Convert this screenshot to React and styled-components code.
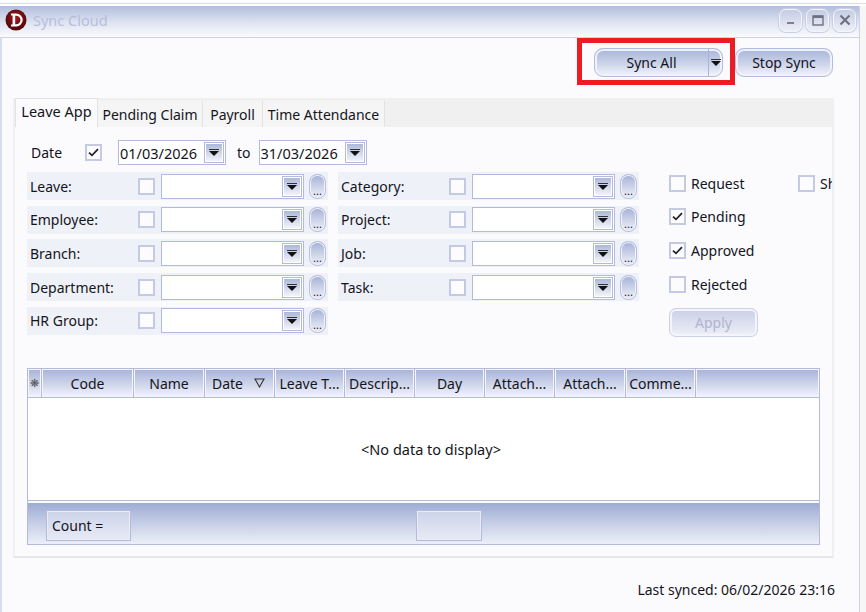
import React from "react";
import styled, { createGlobalStyle } from "styled-components";

const GlobalStyle = createGlobalStyle`
  html, body {
    margin: 0;
    padding: 0;
    background: #fff;
  }
  * {
    box-sizing: border-box;
  }
`;

const leftFilters = ["Leave:", "Employee:", "Branch:", "Department:", "HR Group:"];
const rightFilters = ["Category:", "Project:", "Job:", "Task:"];
const statusChecks = [
  { label: "Request", checked: false },
  { label: "Pending", checked: true },
  { label: "Approved", checked: true },
  { label: "Rejected", checked: false },
];
const columns = [
  { label: "Code", width: 92 },
  { label: "Name", width: 71 },
  { label: "Date", width: 70, sorted: true },
  { label: "Leave T...", width: 70 },
  { label: "Descrip...", width: 70 },
  { label: "Day", width: 70 },
  { label: "Attach...", width: 70 },
  { label: "Attach...", width: 71 },
  { label: "Comme...", width: 70 },
];

const Logo = () => (
  <svg width="22" height="22" viewBox="0 0 22 22">
    <defs>
      <radialGradient id="logoFill" cx="50%" cy="40%" r="60%">
        <stop offset="0%" stopColor="#a5161c" />
        <stop offset="100%" stopColor="#4d0709" />
      </radialGradient>
    </defs>
    <circle cx="11" cy="11" r="10.5" fill="url(#logoFill)" />
    <path
      d="M6 4.5h5.2a6.5 6.5 0 0 1 0 13H6v-2h1.6v-9H6z M10.2 6.7v8.6h1a4.3 4.3 0 0 0 0-8.6z"
      fill="#fff"
      fillRule="evenodd"
    />
  </svg>
);

const Check = () => (
  <svg width="11" height="9" viewBox="0 0 11 9">
    <path d="M1 4.6 L4 7.4 L10 1.2" fill="none" stroke="#222" strokeWidth="1.7" />
  </svg>
);

const CheckBox = ({ checked }) => <Box>{checked && <Check />}</Box>;

const Combo = () => (
  <ComboField>
    <ArrowButton>
      <Arrow />
    </ArrowButton>
  </ComboField>
);

const FilterRow = ({ label }) => (
  <RowBand>
    <RowLabel>{label}</RowLabel>
    <CheckBox />
    <Combo />
    <DotsButton>...</DotsButton>
  </RowBand>
);

export default function App() {
  return (
    <Page>
      <GlobalStyle />
      <TopStrip />
      <Window>
        <TitleBar>
          <Logo />
          <TitleText>Sync Cloud</TitleText>
          <WindowButtons>
            <WindowButton>
              <svg width="10" height="10" viewBox="0 0 10 10">
                <rect x="1" y="7" width="7" height="2" fill="#7d7f8c" />
              </svg>
            </WindowButton>
            <WindowButton>
              <svg width="12" height="11" viewBox="0 0 12 11">
                <rect x="1" y="1" width="10" height="9" fill="none" stroke="#6f7180" strokeWidth="1.4" />
                <rect x="1" y="0.5" width="10" height="2.5" fill="#6f7180" />
              </svg>
            </WindowButton>
            <WindowButton>
              <svg width="12" height="12" viewBox="0 0 12 12">
                <path d="M1.5 1.5 L10.5 10.5 M10.5 1.5 L1.5 10.5" stroke="#6f7180" strokeWidth="2.2" />
              </svg>
            </WindowButton>
          </WindowButtons>
        </TitleBar>
        <Body>
          <Toolbar>
            <SplitButton>
              <SplitLabel>Sync All</SplitLabel>
              <SplitArrow>
                <Arrow />
              </SplitArrow>
              <RedMark />
            </SplitButton>
            <GlossButton>Stop Sync</GlossButton>
          </Toolbar>

          <TabStrip>
            <Tab $active $width={83}>
              Leave App
            </Tab>
            <Tab $width={105}>Pending Claim</Tab>
            <Tab $width={60}>Payroll</Tab>
            <Tab $width={122}>Time Attendance</Tab>
          </TabStrip>

          <TabPanel>
            <DateRow>
              <DateLabel>Date</DateLabel>
              <CheckBox checked />
              <DateField>
                01/03/2026
                <ArrowButton>
                  <Arrow />
                </ArrowButton>
              </DateField>
              <ToLabel>to</ToLabel>
              <DateField $near>
                31/03/2026
                <ArrowButton>
                  <Arrow />
                </ArrowButton>
              </DateField>
            </DateRow>

            <Filters>
              <FilterColumn>
                {leftFilters.map((label) => (
                  <FilterRow key={label} label={label} />
                ))}
              </FilterColumn>
              <FilterColumn>
                {rightFilters.map((label) => (
                  <FilterRow key={label} label={label} />
                ))}
              </FilterColumn>
              <StatusColumn>
                {statusChecks.map((item) => (
                  <StatusRow key={item.label}>
                    <CheckBox checked={item.checked} />
                    <span>{item.label}</span>
                  </StatusRow>
                ))}
                <ApplyButton>Apply</ApplyButton>
              </StatusColumn>
              <ClippedColumn>
                <StatusRow>
                  <CheckBox />
                  <span>Show</span>
                </StatusRow>
              </ClippedColumn>
            </Filters>

            <Grid>
              <GridHeader>
                <IndicatorCell>❋</IndicatorCell>
                {columns.map((col, i) => (
                  <HeaderCell key={i} $width={col.width} $sorted={col.sorted}>
                    <span>{col.label}</span>
                    {col.sorted && (
                      <SortIcon width="11" height="10" viewBox="0 0 11 10">
                        <path d="M1 1 H10 L5.5 9 Z" fill="none" stroke="#333" strokeWidth="1.1" />
                      </SortIcon>
                    )}
                  </HeaderCell>
                ))}
                <FillerCell />
              </GridHeader>
              <GridBody>&lt;No data to display&gt;</GridBody>
              <GridFooter>
                <CountCell>Count =</CountCell>
                <EmptyCell />
              </GridFooter>
            </Grid>
          </TabPanel>

          <StatusBar>Last synced: 06/02/2026 23:16</StatusBar>
        </Body>
      </Window>
    </Page>
  );
}

const Page = styled.div`
  position: relative;
  width: 866px;
  height: 612px;
  overflow: hidden;
  background: #f6f6f6;
  color: #14141c;
  font-family: "Noto Sans", "Open Sans", sans-serif;
  font-size: 14px;
`;

const TopStrip = styled.div`
  height: 6px;
  background: linear-gradient(#fff 3px, #d8dcef 3px, #d8dcef 4px, #fff 4px);
`;

const Window = styled.div`
  width: 860px;
  height: 606px;
  border-right: 1px solid #ccd2e8;
  background: #fbfbfe;
`;

const TitleBar = styled.div`
  height: 31px;
  display: flex;
  align-items: center;
  padding: 0 0 3px 5px;
  background: linear-gradient(#b2bedd, #dfe4f1 55%, #fbfbfe);
`;

const TitleText = styled.span`
  margin-left: 6px;
  color: #b6bedc;
  font-size: 14.5px;
`;

const WindowButtons = styled.div`
  margin-left: auto;
  margin-right: 3px;
  display: flex;
  gap: 4px;
`;

const WindowButton = styled.div`
  width: 23px;
  height: 23px;
  display: flex;
  align-items: center;
  justify-content: center;
  border: 1px solid #f4f5fa;
  border-radius: 7px;
  box-shadow: 0 0 0 1px #c9cfe2;
  background: linear-gradient(#c4cce4, #eef0f7);
`;

const Body = styled.div`
  height: 575px;
  border-top: 1px solid #ccd2e8;
  border-left: 2px solid #d8dcf0;
  padding-left: 11px;
  display: flex;
  flex-direction: column;
`;

const Toolbar = styled.div`
  height: 60px;
  padding: 10px 26px 0 0;
  display: flex;
  justify-content: flex-end;
  align-items: flex-start;
  gap: 12px;
`;

const GlossButton = styled.div`
  width: 98px;
  height: 29px;
  display: flex;
  align-items: center;
  justify-content: center;
  border: 1px solid #b2bbe0;
  border-radius: 9px;
  box-shadow: inset 0 0 0 2px #f0f2fa;
  background: linear-gradient(#a8b5d9, #cdd4ea 55%, #f2f4fb);
`;

const SplitButton = styled(GlossButton)`
  position: relative;
  width: 129px;
  justify-content: flex-start;
`;

const SplitLabel = styled.span`
  flex: 1;
  text-align: center;
`;

const SplitArrow = styled.div`
  width: 14px;
  height: 100%;
  display: flex;
  align-items: center;
  justify-content: center;
  border-left: 1px solid #a9b3da;
`;

const RedMark = styled.div`
  position: absolute;
  left: -18px;
  top: -11px;
  width: 158px;
  height: 47px;
  border: 5px solid #ec1c24;
  pointer-events: none;
`;

const TabStrip = styled.div`
  width: 821px;
  height: 29px;
  display: flex;
  align-items: flex-end;
  background: #f0f0f0;
  padding-left: 2px;
`;

const Tab = styled.div`
  width: ${(props) => props.$width}px;
  height: ${(props) => (props.$active ? "29px" : "26px")};
  display: flex;
  align-items: center;
  justify-content: center;
  flex-shrink: 0;
  border-right: 1px solid #e2e2e2;
  border-top: ${(props) => (props.$active ? "1px solid #e2e2e2" : "none")};
  border-left: ${(props) => (props.$active ? "1px solid #e2e2e2" : "none")};
  background: ${(props) => (props.$active ? "#fbfbfd" : "#f5f5f5")};
  padding-bottom: ${(props) => (props.$active ? "4px" : "0")};
  font-size: ${(props) => (props.$active ? "14.5px" : "14px")};
`;

const TabPanel = styled.div`
  width: 821px;
  height: 431px;
  border: 2px solid #f0f0f0;
  border-top: none;
  border-bottom-color: #e6e6e6;
  padding: 13px 0 0 12px;
  overflow: hidden;
`;

const DateRow = styled.div`
  height: 25px;
  display: flex;
  align-items: center;
  padding-left: 4px;
`;

const DateLabel = styled.span`
  width: 54px;
`;

const DateField = styled.div`
  width: 108px;
  height: 25px;
  margin-left: ${(props) => (props.$near ? "8px" : "16px")};
  padding-left: 1px;
  display: flex;
  align-items: center;
  justify-content: space-between;
  border: 1px solid #b3badf;
  background: #fff;
  font-size: 14.5px;
`;

const ToLabel = styled.span`
  margin-left: 11px;
`;

const Box = styled.div`
  width: 17px;
  height: 17px;
  flex-shrink: 0;
  display: flex;
  align-items: center;
  justify-content: center;
  border: 2px solid #c5cae4;
  background: #fcfcfe;
`;

const ComboField = styled.div`
  width: 143px;
  height: 25px;
  margin-left: 6px;
  display: flex;
  justify-content: flex-end;
  align-items: center;
  border: 1px solid #b3badf;
  background: #fff;
`;

const ArrowButton = styled.div`
  width: 20px;
  height: 21px;
  margin-right: 1px;
  display: flex;
  align-items: center;
  justify-content: center;
  border: 1px solid #b3badf;
  box-shadow: inset 0 0 0 1px #fff;
  background: linear-gradient(#a9b5d8, #f6f7fb);
`;

const Arrow = styled.div`
  width: 10px;
  height: 7px;
  border-top: 1px solid #333;

  &::after {
    content: "";
    display: block;
    margin-top: 1px;
    border-left: 5px solid transparent;
    border-right: 5px solid transparent;
    border-top: 5px solid #111;
  }
`;

const DotsButton = styled.div`
  width: 17px;
  height: 25px;
  margin-left: 5px;
  display: flex;
  align-items: flex-end;
  justify-content: center;
  border: 1px solid #b8bfdf;
  border-radius: 8px;
  box-shadow: inset 0 0 0 1px #f2f3fa;
  background: linear-gradient(#a5b1d6, #e2e6f3 80%);
  font-size: 11px;
  line-height: 14px;
  color: #222;
`;

const Filters = styled.div`
  margin-top: 7px;
  height: 196px;
  display: flex;
`;

const FilterColumn = styled.div`
  width: 301px;
  flex-shrink: 0;
  margin-right: 10px;
  display: flex;
  flex-direction: column;
  gap: 5.7px;
`;

const RowBand = styled.div`
  height: 28px;
  flex-shrink: 0;
  padding-left: 3px;
  display: flex;
  align-items: center;
  background: #eff1f8;
`;

const RowLabel = styled.span`
  width: 108px;
`;

const StatusColumn = styled.div`
  width: 129px;
  flex-shrink: 0;
  margin-left: 20px;
  padding-top: 2px;
  display: flex;
  flex-direction: column;
  gap: 15.7px;
`;

const ClippedColumn = styled.div`
  flex-shrink: 0;
  padding-top: 2px;
`;

const StatusRow = styled.div`
  height: 18px;
  display: flex;
  align-items: center;
  gap: 5px;
`;

const ApplyButton = styled.div`
  width: 89px;
  height: 29px;
  margin-top: -1px;
  display: flex;
  align-items: center;
  justify-content: center;
  border: 1px solid #ccd1e6;
  border-radius: 7px;
  box-shadow: inset 0 0 0 2px #f4f5fb;
  background: linear-gradient(#c9cfe6, #eef0f8);
  color: #b0b4cf;
`;

const Grid = styled.div`
  width: 793px;
  height: 177px;
  display: flex;
  flex-direction: column;
  border: 1px solid #b3badc;
`;

const GridHeader = styled.div`
  height: 29px;
  flex-shrink: 0;
  display: flex;
  border-bottom: 1px solid #b3badc;
`;

const HeaderCell = styled.div`
  position: relative;
  flex-shrink: 0;
  width: ${(props) => props.$width}px;
  padding-right: ${(props) => (props.$sorted ? "24px" : "0")};
  display: flex;
  align-items: center;
  justify-content: center;
  border-right: 1px solid #b3badc;
  box-shadow: inset 0 0 0 1px #f4f5fb;
  background: linear-gradient(#a6b2d8, #d3d9ec 60%, #f3f5fb);
`;

const IndicatorCell = styled(HeaderCell)`
  width: 14px;
  color: #555;
  font-size: 11px;
  font-family: "DejaVu Sans", sans-serif;
`;

const FillerCell = styled(HeaderCell)`
  flex: 1;
  border-right: none;
`;

const SortIcon = styled.svg`
  position: absolute;
  right: 9px;
  top: 9px;
`;

const GridBody = styled.div`
  flex: 1;
  padding-left: 15px;
  display: flex;
  align-items: center;
  justify-content: center;
  background: #fff;
  border-bottom: 1px solid #b3badc;
  font-size: 14.5px;
`;

const GridFooter = styled.div`
  height: 41px;
  margin-top: 2px;
  flex-shrink: 0;
  padding: 7px 0 0 18px;
  display: flex;
  background: linear-gradient(#9dacd4, #c6cfe6 50%, #eceff8);
`;

const FooterCell = styled.div`
  height: 31px;
  border: 1px solid #b3badc;
  box-shadow: inset 0 0 0 1px #e9ecf6;
  background: linear-gradient(#ccd3e9, #e8ebf6);
`;

const CountCell = styled(FooterCell)`
  width: 85px;
  padding-left: 5px;
  display: flex;
  align-items: center;
`;

const EmptyCell = styled(FooterCell)`
  width: 66px;
  margin-left: 285px;
`;

const StatusBar = styled.div`
  width: 822px;
  margin-top: 22px;
  text-align: right;
`;
